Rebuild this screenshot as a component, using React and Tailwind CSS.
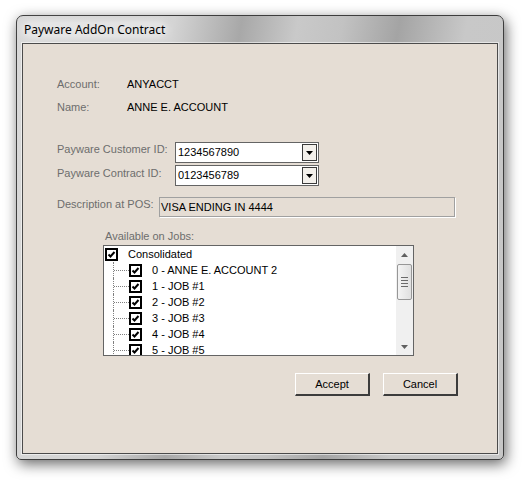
import React from 'react';

const Check = () => (
  <span className="flex h-[13px] w-[13px] shrink-0 items-center justify-center border-2 border-black bg-white">
    <svg width="9" height="9" viewBox="0 0 9 9">
      <path d="M1.5 4.5 L3.5 6.5 L7.5 2" stroke="black" strokeWidth="2" fill="none" />
    </svg>
  </span>
);

const Arrow = ({ up, color = 'black' }) => (
  <svg width="7" height="4" viewBox="0 0 7 4">
    <path d={up ? 'M0 4 L3.5 0 L7 4 Z' : 'M0 0 L7 0 L3.5 4 Z'} fill={color} />
  </svg>
);

const Combo = ({ value }) => (
  <div className="flex h-[21px] w-[144px] border border-[#646464] bg-white">
    <div className="flex flex-1 items-center pl-[2px] text-black">{value}</div>
    <div className="m-[1px] flex w-[15px] items-center justify-center border border-[#3a3a3a] bg-[#f3f0eb]">
      <Arrow />
    </div>
  </div>
);

const Button = ({ children }) => (
  <button className="flex h-[23px] w-[75px] items-center justify-center border-t border-l border-r-2 border-b-2 border-t-white border-l-white border-r-[#3c3c3c] border-b-[#3c3c3c] bg-[#e5ddd4] text-black">
    {children}
  </button>
);

const jobs = ['0 - ANNE E. ACCOUNT 2', '1 - JOB #1', '2 - JOB #2', '3 - JOB #3', '4 - JOB #4', '5 - JOB #5'];

export default function App() {
  return (
    <div className="h-[480px] w-[522px] overflow-hidden bg-white pt-[15px] pl-[16px] font-['Liberation_Sans',Arial,sans-serif] text-[11px] leading-[13px]">
      <div className="flex h-[445px] w-[488px] flex-col rounded-t-[7px] rounded-b-[5px] border border-[#3d3d3d] bg-[linear-gradient(100deg,#d8d8d8_0%,#d4d4d4_28%,#a8a8a8_40%,#c9c9c9_50%,#c2c2c2_58%,#a4a4a4_68%,#c8c8c8_80%,#c6c6c6_100%)] px-[5px] pb-[5px] shadow-[2px_4px_14px_rgba(0,0,0,0.6)]">
        <div className="flex h-[27px] items-center pl-[1px] font-['Noto_Sans',sans-serif] text-[12px] text-black">
          <span className="rounded-[6px] bg-[rgba(255,255,255,0.35)] px-[1px] shadow-[0_0_10px_rgba(255,255,255,0.7)]">Payware AddOn Contract</span>
        </div>
        <div className="flex flex-1 flex-col border border-[#4b4b4b] bg-[#e5ddd4] shadow-[0_0_0_1px_rgba(255,255,255,0.55)]">
          <div className="mt-[34px] flex pl-[34px]">
            <span className="w-[70px] text-[#6d6d6d]">Account:</span>
            <span className="text-black">ANYACCT</span>
          </div>
          <div className="mt-[10px] flex pl-[34px]">
            <span className="w-[70px] text-[#6d6d6d]">Name:</span>
            <span className="text-black">ANNE E. ACCOUNT</span>
          </div>

          <div className="mt-[28px] flex items-start pl-[34px]">
            <span className="mt-[1px] w-[118px] text-[#6d6d6d]">Payware Customer ID:</span>
            <Combo value="1234567890" />
          </div>
          <div className="mt-[2px] flex items-start pl-[34px]">
            <span className="mt-[2px] w-[118px] text-[#6d6d6d]">Payware Contract ID:</span>
            <Combo value="0123456789" />
          </div>

          <div className="mt-[11px] flex items-start pl-[34px]">
            <span className="mt-[1px] w-[102px] text-[#6d6d6d]">Description at POS:</span>
            <div className="flex h-[20px] w-[296px] items-center border border-[#a0a0a0] bg-[#e5ddd4] pl-[1px] text-black shadow-[1px_1px_0_#ffffff]">
              VISA ENDING IN 4444
            </div>
          </div>

          <div className="mt-[13px] pl-[82px] text-[#6d6d6d]">Available on Jobs:</div>
          <div className="mt-[2px] ml-[80px] flex h-[111px] w-[311px] overflow-hidden border border-[#646464] bg-white">
            <div className="flex-1 overflow-hidden text-black">
              <div className="flex h-[16px] items-center pl-[1px]">
                <Check />
                <span className="ml-[10px]">Consolidated</span>
              </div>
              {jobs.map((job) => (
                <div key={job} className="flex h-[16px] items-center pl-[9px]">
                  <span className="flex h-full w-[16px] border-l border-dotted border-[#808080]">
                    <span className="mt-[8px] h-0 w-full border-t border-dotted border-[#808080]" />
                  </span>
                  <Check />
                  <span className="ml-[10px]">{job}</span>
                </div>
              ))}
            </div>
            <div className="flex w-[17px] flex-col bg-[#f0f0f0]">
              <div className="flex h-[17px] items-center justify-center">
                <Arrow up color="#606060" />
              </div>
              <div className="mx-[1px] mt-[1px] flex h-[36px] flex-col items-center justify-center gap-[2px] rounded-[2px] border border-[#979797] bg-[linear-gradient(to_right,#f4f4f4,#e0e0e0)]">
                <span className="h-px w-[7px] bg-[#6a6a6a]" />
                <span className="h-px w-[7px] bg-[#6a6a6a]" />
                <span className="h-px w-[7px] bg-[#6a6a6a]" />
                <span className="h-px w-[7px] bg-[#6a6a6a]" />
              </div>
              <div className="flex-1" />
              <div className="flex h-[17px] items-center justify-center">
                <Arrow color="#606060" />
              </div>
            </div>
          </div>

          <div className="mt-[17px] flex gap-[13px] pl-[272px]">
            <Button>Accept</Button>
            <Button>Cancel</Button>
          </div>
        </div>
      </div>
    </div>
  );
}
